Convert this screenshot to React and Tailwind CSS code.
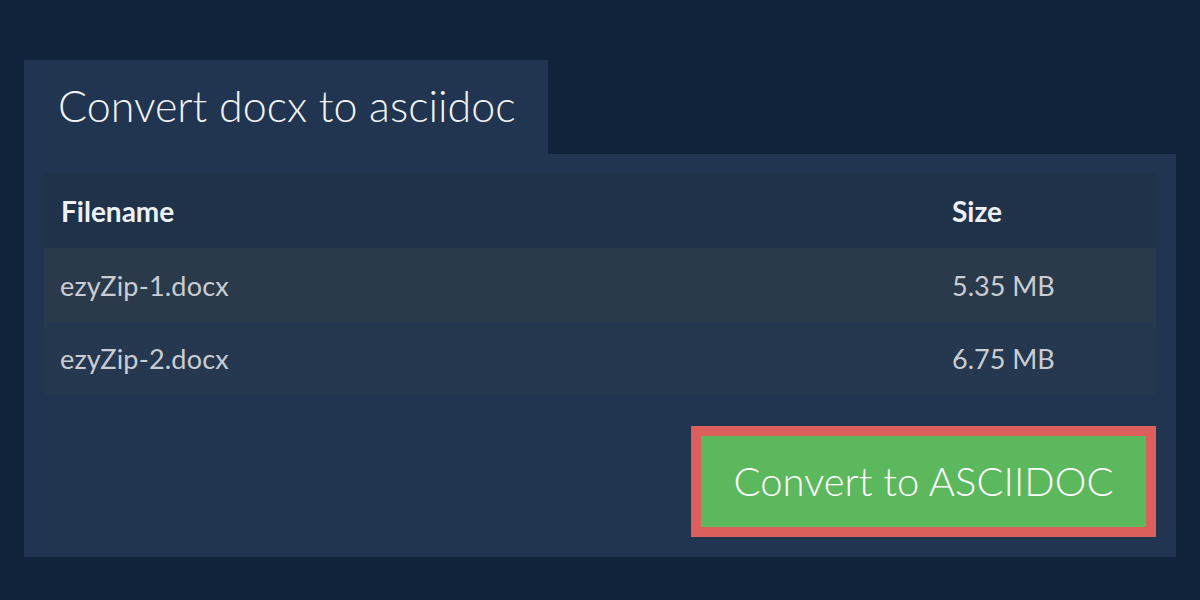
export default function App() {
  const files = [
    { name: 'ezyZip-1.docx', size: '5.35 MB' },
    { name: 'ezyZip-2.docx', size: '6.75 MB' },
  ];

  return (
    <div
      className="w-[1200px] h-[600px] bg-[#10233a] pt-[60px] pl-[24px]"
      style={{ fontFamily: 'Lato, "Open Sans", sans-serif' }}
    >
      <div className="w-[524px] h-[94px] bg-[#213550] flex items-center pl-[34px] pb-[3px]">
        <h1 className="text-[43px] font-light text-[#f1f3f5] leading-none">Convert docx to asciidoc</h1>
      </div>
      <div className="w-[1152px] h-[403px] bg-[#213550] px-[20px] pt-[20px]">
        <table className="w-full border-collapse text-[27px]">
          <thead>
            <tr className="bg-[#1f3249] h-[74px] text-[28px]">
              <th className="text-left font-bold text-[#eef1f4] pl-[17px]">Filename</th>
              <th className="text-left font-bold text-[#eef1f4] w-[204px]">Size</th>
            </tr>
          </thead>
          <tbody>
            {files.map((f, i) => (
              <tr key={f.name} className={i === 0 ? 'bg-[#2b3a4b] h-[74px]' : 'bg-[#253850] h-[72px]'}>
                <td className="pl-[16px] pt-[3px] text-[#c9cdd3] tracking-[0.2px]">{f.name}</td>
                <td className="pt-[3px] text-[#c9cdd3]">{f.size}</td>
              </tr>
            ))}
          </tbody>
        </table>
        <div className="flex justify-end mt-[32px]">
          <button className="w-[465px] h-[111px] border-[10px] border-[#dc5f5c] bg-[#5cb85c] text-white text-[40px] font-light pb-[2px]">
            Convert to ASCIIDOC
          </button>
        </div>
      </div>
    </div>
  );
}
